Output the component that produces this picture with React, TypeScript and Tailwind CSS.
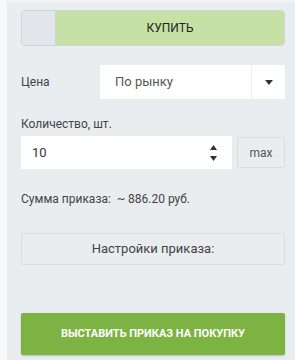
import React from "react";

const App = () => {
  return (
    <div className="w-[295px] h-[360px] flex bg-[#f8f9fa] font-['Roboto',sans-serif] text-[12px] text-[#333]">
      <div className="w-[7px] shrink-0" />
      <div className="flex-1 bg-[#e9edf0] border-t-2 border-[#f2f4f5] pl-[14px] pr-[10px] pt-[8px] flex flex-col">
        {/* buy toggle */}
        <div className="h-[36px] flex rounded-[4px] border border-[#cfd3d6] overflow-hidden">
          <div className="w-[34px] bg-[#e2e6ea] border-r border-[#cfd3d6]" />
          <div className="flex-1 bg-[#c5e1a5] flex items-center justify-center text-[12px] text-[#222]">
            КУПИТЬ
          </div>
        </div>

        {/* price */}
        <div className="flex items-center mt-[19px] h-[34px]">
          <div className="w-[79px] text-[12px] text-[#444]">Цена</div>
          <div className="flex-1 h-full bg-white flex">
            <div className="flex-1 flex items-center pl-[15px] text-[13px] text-[#555]">
              По рынку
            </div>
            <div className="w-[34px] border-l border-[#eceff1] flex items-center justify-center">
              <svg width="8" height="5" viewBox="0 0 8 5">
                <path d="M0 0h8L4 5z" fill="#333" />
              </svg>
            </div>
          </div>
        </div>

        {/* quantity */}
        <div className="mt-[18px] text-[12px] text-[#444] leading-[14px]">Количество, шт.</div>
        <div className="flex mt-[5px] gap-[5px] h-[33px]">
          <div className="flex-1 bg-white flex items-center pl-[11px] pr-[15px] text-[13px] text-[#333]">
            <span className="flex-1">10</span>
            <div className="flex flex-col gap-[6px]">
              <svg width="7" height="5" viewBox="0 0 7 5">
                <path d="M3.5 0L7 5H0z" fill="#333" />
              </svg>
              <svg width="7" height="5" viewBox="0 0 7 5">
                <path d="M0 0h7L3.5 5z" fill="#333" />
              </svg>
            </div>
          </div>
          <div className="w-[48px] mt-[1px] mb-[1px] rounded-[2px] border border-[#d9dde0] flex items-center justify-center text-[12px] text-[#555]">
            max
          </div>
        </div>

        {/* sum */}
        <div className="mt-[23px] text-[12px] text-[#444] leading-[14px] whitespace-pre">
          Сумма приказа:  ~ 886.20 руб.
        </div>

        {/* settings */}
        <div className="mt-[27px] h-[32px] rounded-[2px] border border-[#d9dde0] flex items-center justify-center text-[13px] text-[#444]">
          Настройки приказа:
        </div>

        {/* submit */}
        <div className="mt-[48px] h-[42px] rounded-[2px] bg-[#7cb342] flex items-center justify-center text-[11px] font-bold text-white shadow-[0_1px_2px_rgba(0,0,0,0.2)]">
          ВЫСТАВИТЬ ПРИКАЗ НА ПОКУПКУ
        </div>
      </div>
    </div>
  );
};

export default App;
